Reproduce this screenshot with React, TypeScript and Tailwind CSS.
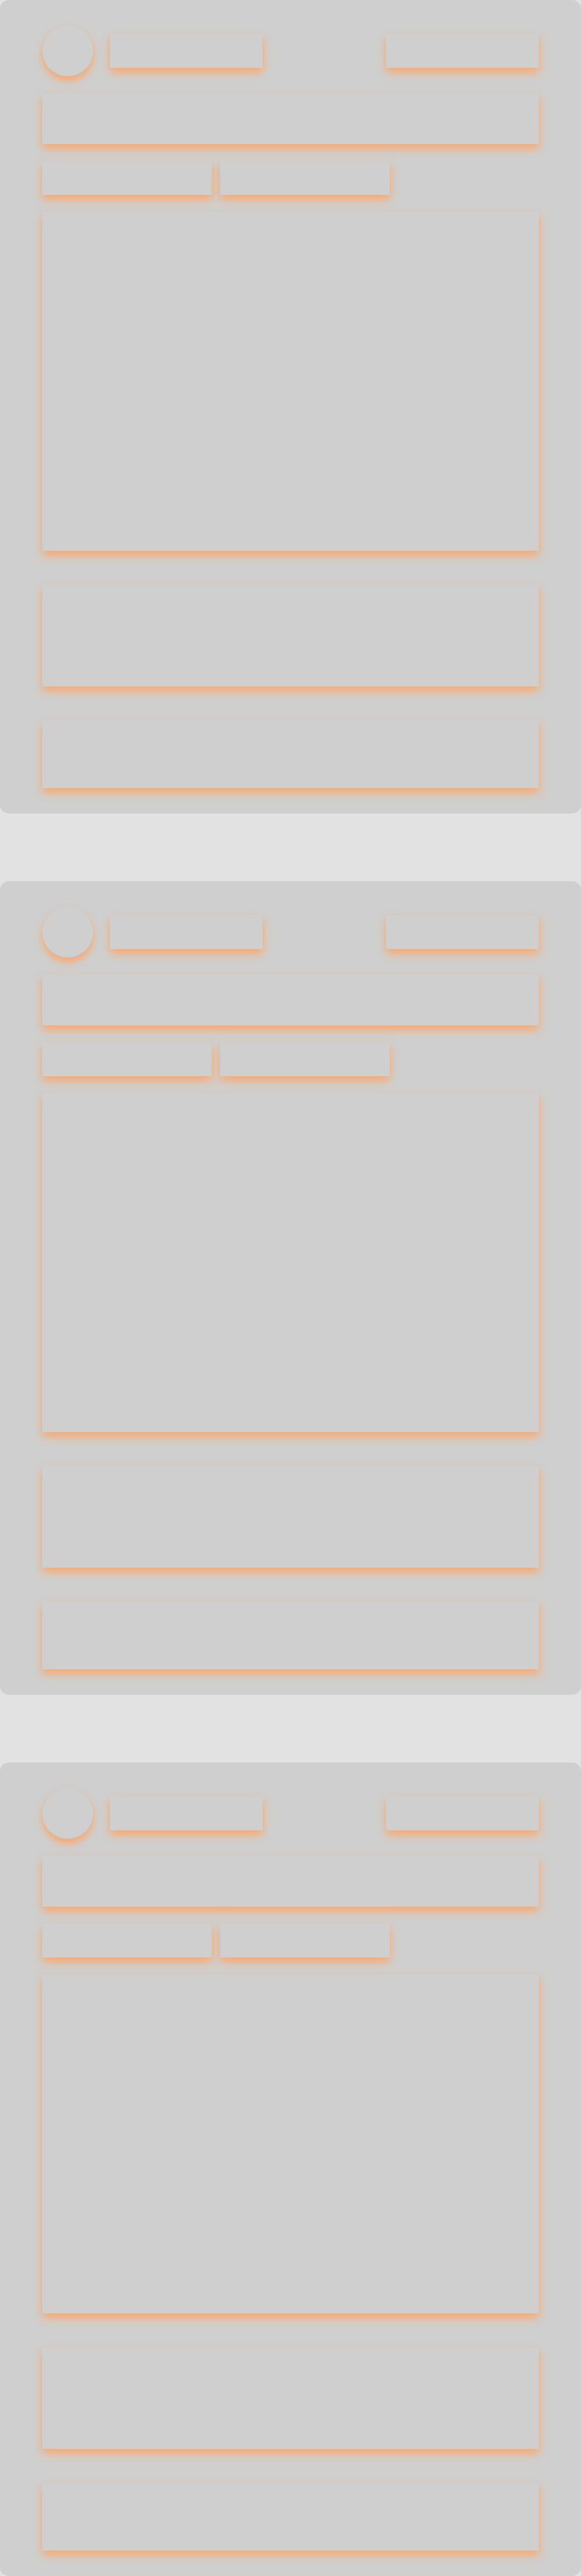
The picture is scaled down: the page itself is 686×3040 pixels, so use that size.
import React from 'react';

const glow = 'bg-[#cfcfcf] shadow-[0_5px_10px_#fba66a]';

function SkeletonCard() {
  return (
    <div className="bg-[#cfcfcf] rounded-[10px] px-[50px] pt-[30px] pb-[30px] flex flex-col">
      <div className="flex items-start justify-between h-[60px]">
        <div className="flex items-center gap-5">
          <div className={`w-[60px] h-[60px] rounded-full ${glow}`} />
          <div className={`w-[180px] h-10 ${glow}`} />
        </div>
        <div className={`w-[180px] h-10 mt-[10px] ${glow}`} />
      </div>

      <div className={`h-[60px] mt-5 ${glow}`} />

      <div className="flex gap-[10px] mt-5">
        <div className={`w-[200px] h-10 ${glow}`} />
        <div className={`w-[200px] h-10 ${glow}`} />
      </div>

      <div className={`h-[400px] mt-5 ${glow}`} />

      <div className={`h-[120px] mt-10 ${glow}`} />

      <div className={`h-20 mt-10 ${glow}`} />
    </div>
  );
}

export default function App() {
  return (
    <div className="min-h-screen bg-[#e2e2e2] flex flex-col gap-20">
      {[0, 1, 2].map((i) => (
        <SkeletonCard key={i} />
      ))}
    </div>
  );
}
